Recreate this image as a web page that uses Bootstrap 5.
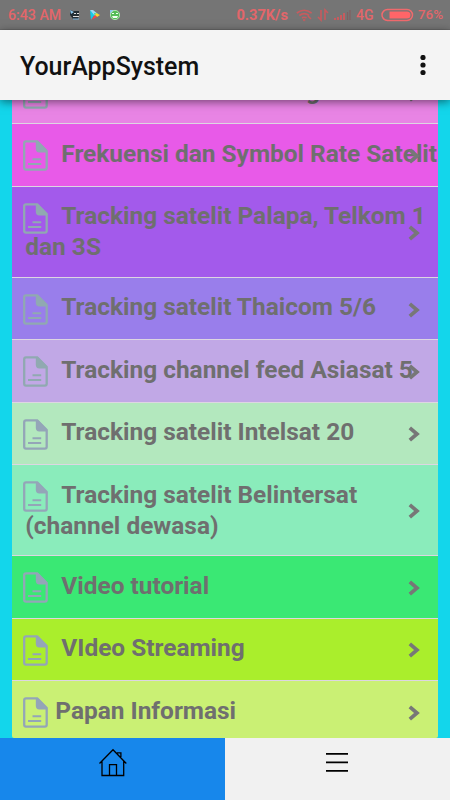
<!DOCTYPE html>
<html lang="id">
<head>
<meta charset="utf-8">
<meta name="viewport" content="width=device-width, initial-scale=1">
<title>YourAppSystem</title>
<link href="https://cdn.jsdelivr.net/npm/bootstrap@5.3.0/dist/css/bootstrap.min.css" rel="stylesheet">
<style>
body{font-family:Roboto,sans-serif;background:#13d6eb;height:800px}
.statusbar{height:30px;background:#757575;color:#e3666a;font-size:14px;padding:0 8px;border-bottom:1px solid #6a6a6a;line-height:30px;font-weight:500}
.statusbar svg{display:block;flex:none}
.clock{font-size:14.2px}
.rate{font-size:14.6px}
.pct{font-size:13.4px;width:24px}
.net{width:17px;margin:0 8px 0 3px}
.appbar{height:70px;background:#f4f4f4;padding:2px 23.5px 0 20px;box-shadow:0 2px 9px rgba(0,0,0,.5);z-index:2}
.appbar h1{font-size:24.95px;font-weight:500;color:#111;line-height:1;padding-top:2.5px}
.scroller{height:637.5px;padding:0 12.3px}
.menu{margin-top:-38.2px}
.menu .entry{height:62.4px;padding:13.6px 0 0 13px;border:0;border-bottom:1.5px solid #ddd6e2;color:#6f6f6f;font-size:24.43px;font-weight:700;line-height:31.2px;background:var(--c);display:block;text-indent:36px}
.menu .tall{height:91.3px}
.menu .last-entry{height:56.7px;text-indent:30px;border-bottom:0;border-radius:0 0 2px 2px}
.first-label{word-spacing:2.6px}
.doc{position:absolute;left:10.5px;top:16px;color:#90a9b1}
.lower .doc{color:#94a5b8}
.chev{position:absolute;right:17.5px;top:50%;margin-top:-7px;color:#777}
.last-entry .chev{margin-top:-4px}
.tabs{height:62.5px}
.tabs a{color:#000}
.tab-home{background:#1787eb}
.tab-menu{background:#f1f1f1;padding:15.5px 1.5px 0 0}
</style>
</head>
<body class="d-flex flex-column overflow-hidden">
<svg class="d-none">
<symbol id="doc" viewBox="0 0 25 31"><path d="M3 1.3h11.2L23.7 11v16.7q0 1.9-1.9 1.9H3q-1.8 0-1.8-1.9V3.2Q1.2 1.3 3 1.3Z" fill="none" stroke="currentColor" stroke-width="2.3"/><path d="M12.800 1h2.200L24 10.200V12.400h-7.700Q12.800 12.400 12.800 8.800Z" fill="currentColor"/><path d="M9.500 19.300h8.700M5 24h13.200" stroke="currentColor" stroke-width="1.900"/></symbol>
<symbol id="chev" viewBox="0 0 12 16"><path d="m1.800 1.800 7.200 6.200-7.200 6.200" fill="none" stroke="currentColor" stroke-width="3.700"/></symbol>
</svg>

<div class="statusbar d-flex align-items-center flex-shrink-0">
  <span class="clock">6:43 AM</span>
  <svg class="ms-2" width="12" height="12" viewBox="0 0 12 12"><path d="M1 1l3 1h6v4l-1 4H4L1 6Z" fill="#222d33"/><path d="M1 1l4 2-3 2Z" fill="#8bc5ec"/><path d="M5 4h2v1H5ZM8 4h2v1H8ZM4 7h6v1H4Z" fill="#ddd"/><path d="M4 10h6" stroke="#78b2dc"/></svg>
  <svg class="ms-2" width="12" height="12" viewBox="0 0 12 12"><path d="M1 1l5 4-4 6Z" fill="#15cbea"/><path d="M1 1h3l5 4-3 2Z" fill="#9dd8f4"/><path d="M5 4l5 1-4 2Z" fill="#25df96"/><path d="M7 4l4 2-3 2-2-2Z" fill="#ffd02c"/><path d="M2 11l4-5 2 2Z" fill="#f4444c"/></svg>
  <svg class="ms-2" width="12" height="12" viewBox="0 0 12 12"><circle cx="6" cy="6" r="5" fill="#55bd57"/><path d="M1 1h4L1 5Z" fill="#8bc5ec"/><path d="M3 4h2v1H3ZM7 4h2v1H7ZM3 7h6L8 9H4Z" fill="#f1fff1"/><circle cx="6" cy="6" r="4.600" fill="none" stroke="#c3eabf" stroke-width=".8"/></svg>
  <span class="rate ms-auto fw-bold">0.37K/s</span>
  <svg class="ms-2" width="57" height="14" viewBox="0 0 57 14" stroke="#c75b5e" fill="none" stroke-width="1.600"><path d="M.8 5q7.200-5.500 14.800 0M3.300 7.500q5-3.700 9.800 0M6 10q2.200-1.500 4.500 0"/><circle cx="8.200" cy="12" r=".4"/><path d="M12 8l3 3M25 2v10l-3-3M29 12V2l3 3"/><path d="M41 10v2M44 9v3M47 7v5M50 5v7" transform="translate(-2)" stroke-width="2"/><path d="M51.500 4v8M54 2v10" stroke="#805f60" stroke-width="1.200"/></svg>
  <span class="net">4G</span>
  <svg class="me-1" width="33" height="14" viewBox="0 0 33 14"><rect x="1" y="1.500" width="30.500" height="11" rx="5.500" fill="none" stroke="#ef6a6d" stroke-width="1.500"/><path d="M8.500 3.500H26a3.500 3.500 0 0 1 0 7H8.500Z" fill="#ff6568"/></svg>
  <span class="pct">76%</span>
</div>

<header class="appbar position-relative d-flex align-items-center justify-content-between flex-shrink-0">
  <h1 class="m-0">YourAppSystem</h1>
  <svg width="8" height="22" viewBox="0 0 8 22" fill="#111"><circle cx="4" cy="2.500" r="2.600"/><circle cx="4" cy="10" r="2.600"/><circle cx="4" cy="17.500" r="2.600"/></svg>
</header>

<main class="scroller overflow-hidden flex-shrink-0">
  <div class="menu list-group rounded-0 text-nowrap">
    <a class="list-group-item entry" style="--c:#e884e4"><svg class="doc" width="25" height="31"><use href="#doc"/></svg><span class="first-label">Informasi dan Tracking</span><svg class="chev" width="12" height="16"><use href="#chev"/></svg></a>
    <a class="list-group-item entry" style="--c:#e85ae8"><svg class="doc" width="25" height="31"><use href="#doc"/></svg>Frekuensi dan Symbol Rate Satelit<svg class="chev" width="12" height="16"><use href="#chev"/></svg></a>
    <a class="list-group-item entry tall" style="--c:#a35aeb"><svg class="doc" width="25" height="31"><use href="#doc"/></svg>Tracking satelit Palapa, Telkom 1<br>dan 3S<svg class="chev" width="12" height="16"><use href="#chev"/></svg></a>
    <a class="list-group-item entry" style="--c:#997eeb"><svg class="doc" width="25" height="31"><use href="#doc"/></svg>Tracking satelit Thaicom 5/6<svg class="chev" width="12" height="16"><use href="#chev"/></svg></a>
    <a class="list-group-item entry" style="--c:#c1a8e6"><svg class="doc" width="25" height="31"><use href="#doc"/></svg>Tracking channel feed Asiasat 5<svg class="chev" width="12" height="16"><use href="#chev"/></svg></a>
    <a class="list-group-item entry lower" style="--c:#b3e8be"><svg class="doc" width="25" height="31"><use href="#doc"/></svg>Tracking satelit Intelsat 20<svg class="chev" width="12" height="16"><use href="#chev"/></svg></a>
    <a class="list-group-item entry tall lower" style="--c:#8aecbb"><svg class="doc" width="25" height="31"><use href="#doc"/></svg>Tracking satelit Belintersat<br>(channel dewasa)<svg class="chev" width="12" height="16"><use href="#chev"/></svg></a>
    <a class="list-group-item entry lower" style="--c:#3ae874"><svg class="doc" width="25" height="31"><use href="#doc"/></svg>Video tutorial<svg class="chev" width="12" height="16"><use href="#chev"/></svg></a>
    <a class="list-group-item entry lower" style="--c:#aaee2c"><svg class="doc" width="25" height="31"><use href="#doc"/></svg>VIdeo Streaming<svg class="chev" width="12" height="16"><use href="#chev"/></svg></a>
    <a class="list-group-item entry last-entry lower" style="--c:#caf074"><svg class="doc" width="25" height="31"><use href="#doc"/></svg>Papan Informasi<svg class="chev" width="12" height="16"><use href="#chev"/></svg></a>
  </div>
</main>

<nav class="tabs row g-0 flex-shrink-0">
  <a class="col-6 tab-home d-flex justify-content-center pt-2"><svg width="30" height="32" viewBox="0 0 30 32" fill="none" stroke="currentColor" stroke-width="1.300"><path d="M1.500 17.500 15 3.800l13.300 13.700M4 15v14.500h21.700V15M11.500 29.500V18.700h7v10.800M19.500 7.500V6.800h3.400V11"/></svg></a>
  <a class="col-6 tab-menu d-flex justify-content-center"><svg width="22" height="20" viewBox="0 0 22 20" stroke="currentColor" stroke-width="1.700"><path d="M0 .9h22M0 9.400h22M0 17.900h22"/></svg></a>
</nav>
<script src="https://cdn.jsdelivr.net/npm/bootstrap@5.3.0/dist/js/bootstrap.bundle.min.js"></script>
</body>
</html>
